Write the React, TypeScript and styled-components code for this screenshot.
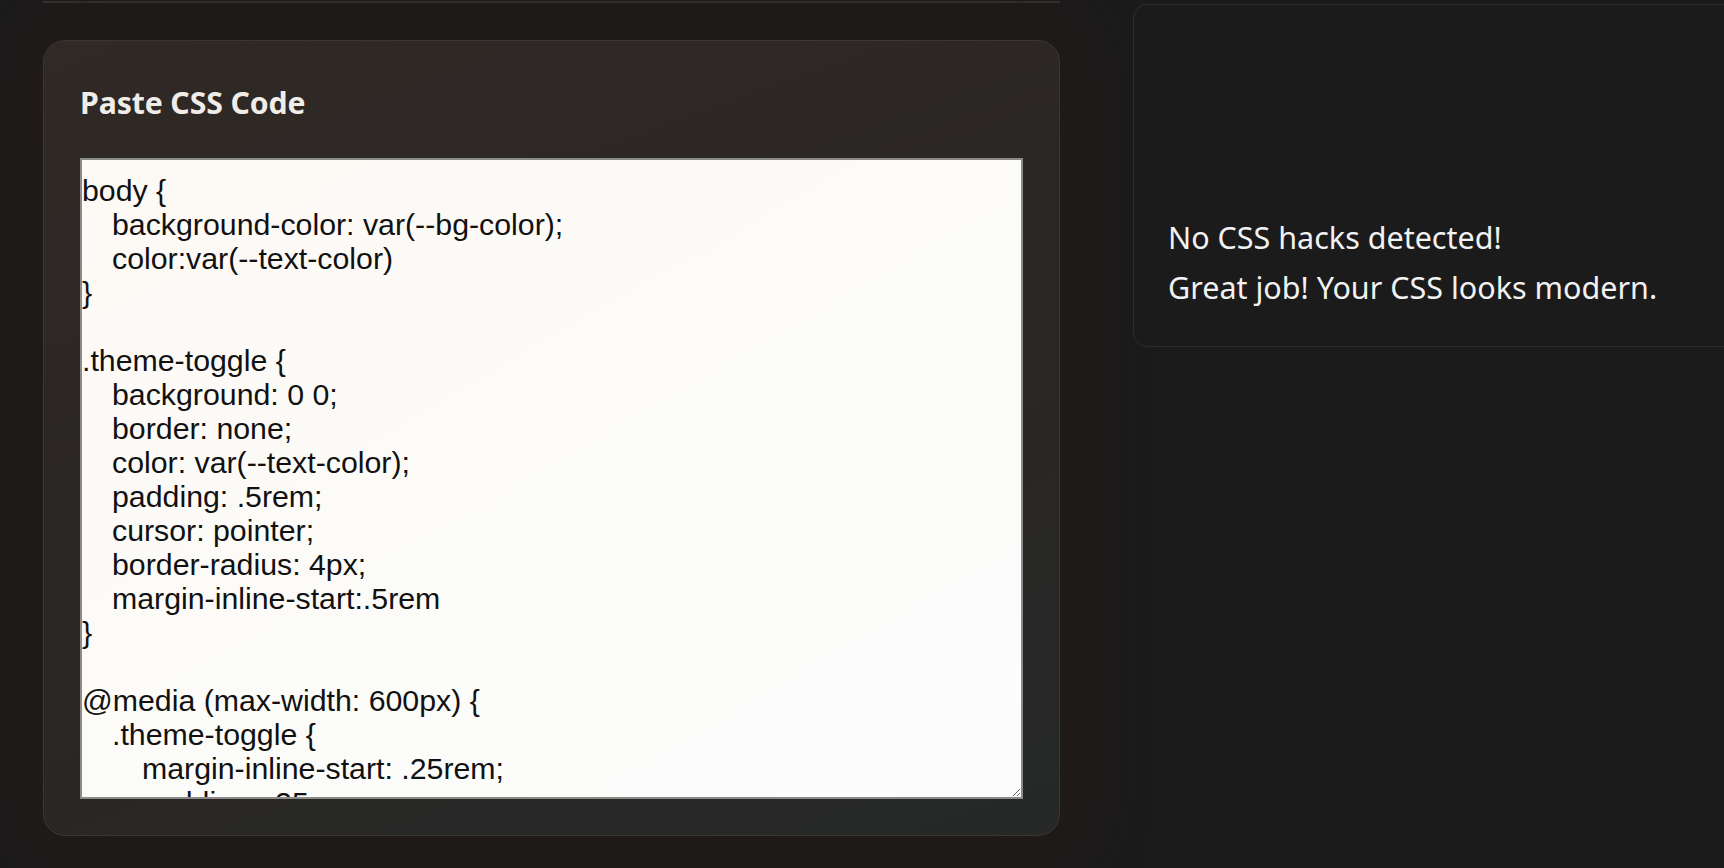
import React from "react";
import styled, { createGlobalStyle } from "styled-components";

const Global = createGlobalStyle`
  html, body {
    margin: 0;
    padding: 0;
    background: #1c1b1b;
    overflow: hidden;
  }
  body {
    font-family: "Noto Sans", "Liberation Sans", sans-serif;
  }
`;

const Page = styled.div`
  display: flex;
  align-items: flex-start;
  gap: 73px;
  padding-left: 43px;
  width: max-content;
  min-height: 868px;
  box-sizing: border-box;
`;

const LeftColumn = styled.div`
  display: flex;
  flex-direction: column;
  width: 1017px;
  flex-shrink: 0;
`;

const PreviousSectionEdge = styled.div`
  height: 1px;
  border-bottom: 2px solid #34312f;
`;

const Card = styled.section`
  margin-top: 37px;
  display: flex;
  flex-direction: column;
  padding: 42px 36px 36px 36px;
  border: 1px solid #3a3634;
  border-radius: 22px;
  background: linear-gradient(160deg, #302926 0%, #2b2725 45%, #262828 100%);
  box-shadow: 0 0 70px 10px rgba(36, 28, 24, 0.9);
`;

const Title = styled.h2`
  margin: 0 0 35px;
  font-family: "Noto Sans", sans-serif;
  font-weight: 700;
  font-size: 30.2px;
  line-height: 40px;
  color: #f0ece8;
  letter-spacing: -0.1px;
`;

const CodeArea = styled.textarea`
  box-sizing: border-box;
  width: 943px;
  height: 641px;
  margin: 0;
  padding: 14px 0 0 0;
  border: 2px solid #8a8a88;
  border-radius: 0;
  background: linear-gradient(150deg, #fdf9f5 0%, #fcfbf8 45%, #fbfdfc 100%);
  color: #111;
  font-family: "Liberation Sans", Arial, sans-serif;
  font-size: 30.3px;
  line-height: 34px;
  tab-size: 30px;
  white-space: pre;
  overflow: hidden;
  outline: none;
  resize: both;
  display: block;
`;

const ResultPanel = styled.aside`
  margin-top: 4px;
  width: 1017px;
  height: 343px;
  flex-shrink: 0;
  box-sizing: border-box;
  display: flex;
  flex-direction: column;
  justify-content: flex-end;
  padding: 0 35px 34px 34px;
  border: 1px solid #2d2d2d;
  border-radius: 14px;
  background: #1b1b1b;
`;

const ResultLine = styled.p`
  margin: 0;
  font-family: "Noto Sans", sans-serif;
  font-size: 30.5px;
  line-height: 49.5px;
  color: #f2f2f2;
`;

const cssCode = `body {
\tbackground-color: var(--bg-color);
\tcolor:var(--text-color)
}

.theme-toggle {
\tbackground: 0 0;
\tborder: none;
\tcolor: var(--text-color);
\tpadding: .5rem;
\tcursor: pointer;
\tborder-radius: 4px;
\tmargin-inline-start:.5rem
}

@media (max-width: 600px) {
\t.theme-toggle {
\t\tmargin-inline-start: .25rem;
\t\tpadding: .25rem
\t}
}`;

export default function App() {
  return (
    <>
      <Global />
      <Page>
        <LeftColumn>
          <PreviousSectionEdge />
          <Card>
            <Title>Paste CSS Code</Title>
            <CodeArea defaultValue={cssCode} spellCheck={false} />
          </Card>
        </LeftColumn>
        <ResultPanel>
          <ResultLine>No CSS hacks detected!</ResultLine>
          <ResultLine>Great job! Your CSS looks modern.</ResultLine>
        </ResultPanel>
      </Page>
    </>
  );
}
